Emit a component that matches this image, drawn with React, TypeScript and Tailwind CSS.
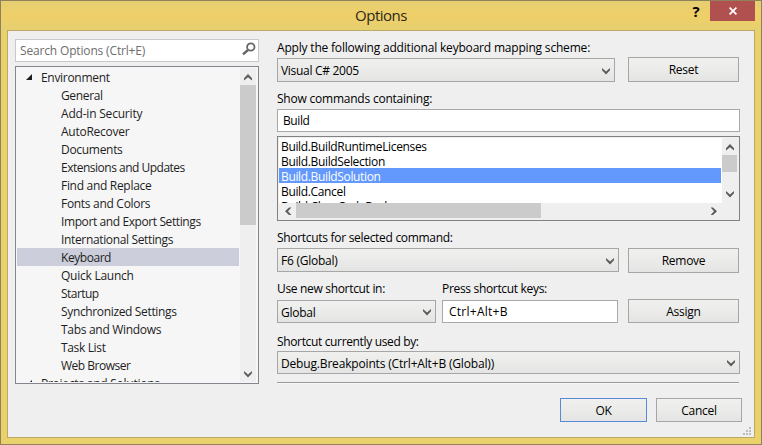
import React from "react";

const treeItems = [
  { name: "General", tracking: "tracking-[-0.35px]" },
  { name: "Add-in Security", tracking: "tracking-[-0.2px]" },
  { name: "AutoRecover", tracking: "tracking-[-0.25px]" },
  { name: "Documents", tracking: "tracking-[-0.3px]" },
  { name: "Extensions and Updates", tracking: "tracking-[-0.5px]" },
  { name: "Find and Replace", tracking: "tracking-[-0.3px]" },
  { name: "Fonts and Colors", tracking: "tracking-[-0.3px]" },
  { name: "Import and Export Settings", tracking: "tracking-[-0.4px]" },
  { name: "International Settings", tracking: "tracking-[-0.35px]" },
  { name: "Keyboard", tracking: "tracking-[-0.45px]" },
  { name: "Quick Launch", tracking: "tracking-[-0.25px]" },
  { name: "Startup", tracking: "tracking-[-0.55px]" },
  { name: "Synchronized Settings", tracking: "tracking-[-0.35px]" },
  { name: "Tabs and Windows", tracking: "tracking-[-0.3px]" },
  { name: "Task List", tracking: "tracking-[-0.35px]" },
  { name: "Web Browser", tracking: "tracking-[-0.5px]" },
];

const commands = [
  "Build.BuildRuntimeLicenses",
  "Build.BuildSelection",
  "Build.BuildSolution",
  "Build.Cancel",
  "Build.ClearCodeBack",
];

const face = "bg-linear-to-b from-[#f0f0ef] via-[#ebece9] to-[#e4e4e4]";

type Direction = "up" | "down" | "left" | "right";

const chevrons: Record<Direction, string> = {
  up: "M0 5.3 4 1 8 5.3V7.6L4 4.2 0 7.6Z",
  down: "M0 1 4 4.4 8 1V3.3L4 7.6 0 3.3Z",
  left: "M5 0.5 1 4.2 5 8H7.4L4 4.2 7.4 0.5Z",
  right: "M3 0.5 7 4.2 3 8H0.6L4 4.2 0.6 0.5Z",
};

function Chevron({ dir }: { dir: Direction }) {
  return (
    <svg width="8" height="8" viewBox="0 0 8 8" className="shrink-0" fill="#5c5c5c">
      <path d={chevrons[dir]} />
    </svg>
  );
}

function Label({ children, className }: { children: React.ReactNode; className: string }) {
  return <div className={`flex items-center whitespace-nowrap ${className}`}>{children}</div>;
}

function Combo({ value, className }: { value: string; className: string }) {
  return (
    <div className={`flex items-center justify-between border border-[#a6a6a6] pl-[3px] pr-1 whitespace-nowrap ${face} ${className}`}>
      <span>{value}</span>
      <Chevron dir="down" />
    </div>
  );
}

function Button({ label, className }: { label: string; className: string }) {
  return (
    <button className={`flex items-center justify-center border ${face} ${className}`}>{label}</button>
  );
}

function Expander() {
  return (
    <svg width="8" height="8" viewBox="0 0 8 8" className="mr-2">
      <path d="M7 1V7H1Z" fill="#1e1e1e" />
    </svg>
  );
}

function Tree() {
  return (
    <div className="mt-1 flex h-[318px] border border-[#84868d] bg-[#f6f6f6] p-px text-[#1e1e1e]">
      <div className="h-[314px] w-[222px] overflow-hidden whitespace-nowrap">
        <div className="flex h-[18px] items-center pl-2 tracking-[-0.3px]">
          <Expander />
          Environment
        </div>
        {treeItems.map(({ name, tracking }) => (
          <div
            key={name}
            className={`flex h-[18px] items-center pl-11 ${tracking} ${name === "Keyboard" ? "bg-[#cccedb]" : ""}`}
          >
            {name}
          </div>
        ))}
        <div className="flex h-[18px] items-center pl-2">
          <Expander />
          Projects and Solutions
        </div>
      </div>
      <div className="ml-px flex w-4 flex-col items-center bg-[#efefef]">
        <div className="flex h-[17px] items-center"><Chevron dir="up" /></div>
        <div className="h-[140px] w-full bg-[#cbcbcb]" />
        <div className="mt-auto flex h-[17px] items-center"><Chevron dir="down" /></div>
      </div>
    </div>
  );
}

function CommandList() {
  return (
    <div className="mt-1 flex h-[85px] w-[463px] flex-col border border-[#828282] bg-[#efefef] p-px">
      <div className="flex h-[65px]">
        <div className="h-[65px] w-[443px] overflow-hidden bg-white tracking-[-0.35px] whitespace-nowrap">
          {commands.map((c) => (
            <div
              key={c}
              className={`flex h-[15px] w-[442px] items-center pt-px pl-0.5 ${
                c === "Build.BuildSolution" ? "bg-[#6399fc] text-white" : ""
              }`}
            >
              {c}
            </div>
          ))}
        </div>
        <div className="flex w-[15px] flex-col items-center">
          <div className="flex h-[17px] items-center"><Chevron dir="up" /></div>
          <div className="h-[17px] w-full bg-[#cbcbcb]" />
          <div className="mt-auto flex h-[19px] items-center"><Chevron dir="down" /></div>
        </div>
      </div>
      <div className="flex h-[15px] w-[443px] items-center">
        <div className="flex w-[17px] justify-center"><Chevron dir="left" /></div>
        <div className="h-full w-[245px] bg-[#cbcbcb]" />
        <div className="ml-auto flex w-[17px] justify-center"><Chevron dir="right" /></div>
      </div>
    </div>
  );
}

export default function App() {
  return (
    <div className="h-[445px] w-[762px] overflow-hidden border border-[#8f815a] bg-[#e9d16c] font-['Open_Sans','Noto_Sans',sans-serif] text-[12px] leading-[15px] tracking-[-0.25px] text-black">
      <div className="flex h-[29px] justify-end bg-linear-to-b from-[#e5cf73] via-[#f0cf68] to-[#e5d070]">
        <div className="flex grow items-center justify-center pl-[79px] text-[15px] tracking-[-0.5px] text-[#2c2819]">Options</div>
        <div className="flex h-5 w-7 items-center justify-center text-[15px] font-bold">?</div>
        <div className="flex h-5 w-[45px] items-center justify-center bg-[#b05150]">
          <svg width="8" height="8" viewBox="0 0 8 8" stroke="white" strokeWidth="1.7">
            <path d="M0.6 0.6 7.4 7.4M7.4 0.6 0.6 7.4" />
          </svg>
        </div>
        <div className="w-1.5" />
      </div>
      <div className="relative ml-1.5 flex h-[408px] w-[748px] border border-[#bfa865] bg-[#efefef]">
        <div className="ml-[7px] w-[244px] pt-2">
          <div className="flex h-[23px] items-center justify-between border border-[#c8c9cf] bg-white pr-0.5 pl-1 text-[#6d6d6d]">
            <span className="tracking-[-0.16px]">Search Options (Ctrl+E)</span>
            <svg width="14" height="14" viewBox="0 0 14 14" fill="none" stroke="#666" className="mb-1">
              <circle cx="8.8" cy="5" r="3.7" strokeWidth="1.8" />
              <path d="M6 8 1 12.4" strokeWidth="2.4" />
            </svg>
          </div>
          <Tree />
        </div>
        <div className="ml-[18px] w-[466px]">
          <Label className="mt-2 h-[17px] tracking-[-0.19px]">Apply the following additional keyboard mapping scheme:</Label>
          <div className="mt-px flex gap-[13px]">
            <Combo value="Visual C# 2005" className="mt-px h-6 w-[338px] pt-px tracking-[-0.3px]" />
            <Button label="Reset" className="h-[25px] w-[111px] border-[#a6a6a6]" />
          </div>
          <Label className="mt-2 h-[17px] tracking-[-0.22px]">Show commands containing:</Label>
          <div className="mt-0.5 flex h-[23px] w-[463px] items-center border border-[#a9a9a9] bg-white pb-px pl-[5px] tracking-[-0.4px]">Build</div>
          <CommandList />
          <Label className="mt-2 h-[17px] tracking-[-0.3px]">Shortcuts for selected command:</Label>
          <div className="mt-0.5 flex gap-[9px]">
            <Combo value="F6 (Global)" className="h-6 w-[342px] pt-px" />
            <Button label="Remove" className="h-[25px] w-[111px] border-[#a6a6a6]" />
          </div>
          <div className="mt-[7px] flex gap-1.5">
            <Label className="h-[17px] w-[159px] tracking-[-0.32px]">Use new shortcut in:</Label>
            <Label className="h-[17px] tracking-[-0.32px]">Press shortcut keys:</Label>
          </div>
          <div className="mt-0.5 flex">
            <Combo value="Global" className="mt-px h-[23px] w-[159px] pt-px" />
            <div className="mt-px ml-1.5 flex h-[23px] w-[176px] items-center border border-[#a9a9a9] bg-white pb-px pl-1.5 tracking-[0.25px]">Ctrl+Alt+B</div>
            <Button label="Assign" className="ml-2.5 h-6 w-[111px] border-[#a6a6a6]" />
          </div>
          <Label className="mt-2.5 h-[17px] tracking-[-0.35px]">Shortcut currently used by:</Label>
          <Combo value="Debug.Breakpoints (Ctrl+Alt+B (Global))" className="mt-px h-[23px] w-[463px] pt-px tracking-[-0.17px]" />
          <div className="mt-2 h-0.5 w-[462px] border-t border-[#999] bg-[#f8f8f8]" />
          <div className="mt-3.5 flex justify-end gap-[9px] pr-px">
            <Button label="OK" className="h-6 w-[87px] border-[#5a8ad6]" />
            <Button label="Cancel" className="h-6 w-[86px] border-[#a6a6a6]" />
          </div>
        </div>
        <svg width="8" height="8" viewBox="0 0 8 8" className="absolute right-[3px] bottom-0.5" fill="#bcbcbc">
          <path d="M6 0h2v2H6zM3 3h2v2H3zM6 3h2v2H6zM0 6h2v2H0zM3 6h2v2H3zM6 6h2v2H6z" />
        </svg>
      </div>
    </div>
  );
}
